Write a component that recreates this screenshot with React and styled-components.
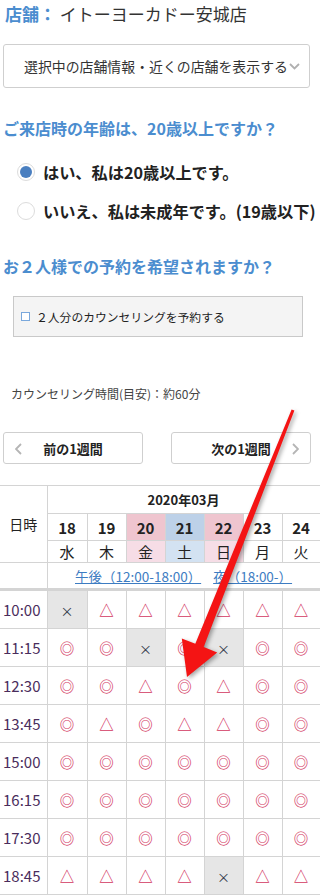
import React from "react";
import styled, { createGlobalStyle } from "styled-components";

const GlobalStyle = createGlobalStyle`
  html, body {
    margin: 0;
    padding: 0;
    background: #fff;
  }
  body {
    font-family: "Noto Sans CJK JP", "Noto Sans", sans-serif;
    color: #333;
  }
`;

const BLUE = "#4b8dcf";

const Page = styled.div`
  position: relative;
  width: 320px;
  height: 895px;
  overflow: hidden;
`;

const StoreLine = styled.div`
  padding: 4px 0 0 5px;
  font-size: 17px;
  line-height: 20px;
  color: #333;
  white-space: nowrap;
`;

const StoreLabel = styled.span`
  color: ${BLUE};
  font-weight: 700;
`;

const SelectBox = styled.div`
  margin: 20px 10px 0 3px;
  height: 44px;
  box-sizing: border-box;
  border: 1px solid #cfcfcf;
  border-radius: 3px;
  display: flex;
  align-items: center;
  gap: 1px;
  padding: 0 0 0 20px;
  font-size: 13.9px;
  color: #333;
  white-space: nowrap;
  overflow: hidden;

  svg {
    flex: none;
  }
`;

const Heading = styled.h2`
  margin: ${(p) => p.$top}px 0 0 3px;
  font-size: 16px;
  line-height: 22px;
  font-weight: 700;
  color: ${BLUE};
  white-space: nowrap;
`;

const RadioRow = styled.label`
  display: flex;
  align-items: center;
  gap: 8px;
  height: 30px;
  margin-top: ${(p) => p.$top}px;
  padding-left: 17px;
  font-size: 16.2px;
  font-weight: 700;
  color: #222;
  white-space: nowrap;
`;

const RadioDot = styled.span`
  position: relative;
  flex: none;
  width: 18px;
  height: 18px;
  box-sizing: border-box;
  border: 1px solid #dcdcdc;
  border-radius: 50%;
  background: #fff;

  &::after {
    content: "";
    position: absolute;
    left: 2px;
    top: 2px;
    width: 12px;
    height: 12px;
    border-radius: 50%;
    background: ${(p) => (p.$checked ? "#4a7fc0" : "transparent")};
  }
`;

const CheckPanel = styled.div`
  margin: 19px 0 0 13px;
  width: 290px;
  height: 41px;
  box-sizing: border-box;
  border: 1px solid #c9c9c9;
  background: #f4f4f4;
  display: flex;
  align-items: center;
  padding-left: 7px;
  gap: 6px;
  font-size: 11.8px;
  color: #222;
  white-space: nowrap;
`;

const CheckSquare = styled.span`
  flex: none;
  width: 9px;
  height: 9px;
  box-sizing: border-box;
  border: 1px solid #7aa8dc;
  background: #fff;
`;

const InfoText = styled.p`
  margin: 48px 0 0 11px;
  font-size: 12px;
  line-height: 18px;
  color: #444;
  white-space: nowrap;
`;

const WeekNav = styled.div`
  display: flex;
  gap: 28px;
  margin: 29px 0 0 3px;
`;

const WeekButton = styled.button`
  position: relative;
  width: 140px;
  height: 32px;
  box-sizing: border-box;
  border: 1px solid #cfcfcf;
  border-radius: 3px;
  background: #fff;
  font-family: inherit;
  font-size: 13px;
  font-weight: 700;
  color: #222;
  padding: 0;
  cursor: pointer;

  svg {
    position: absolute;
    top: 10px;
    ${(p) => (p.$side === "left" ? "left: 11px;" : "right: 11px;")}
  }
`;

const Table = styled.table`
  margin-top: 21px;
  width: 320px;
  border-collapse: collapse;
  table-layout: fixed;
`;

const Cell = styled.td`
  border: 1px solid #d4d4d4;
  padding: 0;
  text-align: center;
  vertical-align: middle;
  height: ${(p) => p.$h || 37}px;
  background: ${(p) => p.$bg || "#fff"};
  font-size: ${(p) => p.$fs || 15}px;
  font-weight: ${(p) => (p.$bold ? 700 : 400)};
  color: #222;
  white-space: nowrap;

  &:first-child {
    border-left: none;
  }
`;

const HeadRule = styled.tr`
  td {
    border-bottom: 3px solid #d4d4d4;
  }
`;

const TimeCell = styled(Cell)`
  text-align: left;
  padding-left: 3px;
  font-size: 15px;
  color: #4a2d5c;
`;

const Mark = styled.span`
  font-size: ${(p) => (p.$kind === "x" ? 13 : 14.5)}px;
  font-weight: ${(p) => (p.$kind === "x" ? 400 : 700)};
  color: ${(p) => (p.$kind === "x" ? "#2f3646" : "#d3375f")};
`;

const SlotLink = styled.a`
  color: #3d7cc2;
  text-decoration: underline;
  font-size: 13.5px;
  margin: 0 6px;
`;

const ArrowLayer = styled.svg`
  position: absolute;
  left: 0;
  top: 0;
  pointer-events: none;
  filter: drop-shadow(2px 2px 2px rgba(0, 0, 0, 0.35));
`;

const days = [
  { d: "18", w: "水" },
  { d: "19", w: "木" },
  { d: "20", w: "金", tone: "pink" },
  { d: "21", w: "土", tone: "blue" },
  { d: "22", w: "日", tone: "pink" },
  { d: "23", w: "月" },
  { d: "24", w: "火" },
];

const dayBg = { pink: "#efc5cf", blue: "#bdd1e8" };
const weekBg = { pink: "#f6dde6", blue: "#d3e2f2" };

const slots = [
  ["10:00", "x t t t t t t"],
  ["11:15", "o o x o x o o"],
  ["12:30", "o o t o t o o"],
  ["13:45", "o t o t t o o"],
  ["15:00", "o o o o o o o"],
  ["16:15", "o o o o o o o"],
  ["17:30", "o o o o o o o"],
  ["18:45", "t t t t x t t"],
];

const glyph = { o: "◎", t: "△", x: "×" };

const Chevron = ({ dir }) => (
  <svg width="7" height="12" viewBox="0 0 7 12">
    <polyline
      points={dir === "left" ? "6,1 1,6 6,11" : "1,1 6,6 1,11"}
      fill="none"
      stroke="#b5b5b5"
      strokeWidth="1.8"
    />
  </svg>
);

const Arrow = () => (
  <ArrowLayer width="320" height="895" viewBox="0 0 320 895">
    <polygon
      points="294.4,410.6 203.7,647.1 217.2,652.4 187,677 181.8,638.4 195.3,643.7 291.6,409.4"
      fill="#f41414"
    />
  </ArrowLayer>
);

export default function App() {
  return (
    <Page>
      <GlobalStyle />
      <StoreLine>
        <StoreLabel>店舗：</StoreLabel> イトーヨーカドー安城店
      </StoreLine>

      <SelectBox>
        <span>選択中の店舗情報・近くの店舗を表示する</span>
        <svg width="11" height="7" viewBox="0 0 11 7">
          <polyline points="1,1 5.5,5.5 10,1" fill="none" stroke="#b0b0b0" strokeWidth="1.8" />
        </svg>
      </SelectBox>

      <Heading $top={29}>ご来店時の年齢は、20歳以上ですか？</Heading>
      <RadioRow $top={18}>
        <RadioDot $checked />
        はい、私は20歳以上です。
      </RadioRow>
      <RadioRow $top={9}>
        <RadioDot />
        いいえ、私は未成年です。(19歳以下)
      </RadioRow>

      <Heading $top={29}>お２人様での予約を希望されますか？</Heading>
      <CheckPanel>
        <CheckSquare />
        ２人分のカウンセリングを予約する
      </CheckPanel>

      <InfoText>カウンセリング時間(目安)：約60分</InfoText>

      <WeekNav>
        <WeekButton $side="left">
          <Chevron dir="left" />
          前の1週間
        </WeekButton>
        <WeekButton $side="right">
          次の1週間
          <Chevron dir="right" />
        </WeekButton>
      </WeekNav>

      <Table>
        <colgroup>
          <col style={{ width: 47 }} />
          <col style={{ width: 40 }} />
          <col style={{ width: 39 }} />
          <col style={{ width: 39 }} />
          <col style={{ width: 39 }} />
          <col style={{ width: 39 }} />
          <col style={{ width: 39 }} />
          <col style={{ width: 38 }} />
        </colgroup>
        <thead>
          <tr>
            <Cell as="th" rowSpan={3} $fs={14}>
              日時
            </Cell>
            <Cell as="th" colSpan={7} $h={27} $fs={13} $bold>
              2020年03月
            </Cell>
          </tr>
          <tr>
            {days.map((x) => (
              <Cell key={x.d} $h={26} $bold $bg={dayBg[x.tone]}>
                {x.d}
              </Cell>
            ))}
          </tr>
          <tr>
            {days.map((x) => (
              <Cell key={x.d} $h={19} $bg={weekBg[x.tone]}>
                {x.w}
              </Cell>
            ))}
          </tr>
          <HeadRule>
            <Cell $h={25} />
            <Cell colSpan={7} $h={25}>
              <SlotLink href="#pm">午後（12:00-18:00）</SlotLink>
              <SlotLink href="#night">夜（18:00-）</SlotLink>
            </Cell>
          </HeadRule>
        </thead>
        <tbody>
          {slots.map(([time, marks]) => (
            <tr key={time}>
              <TimeCell>{time}</TimeCell>
              {marks.split(" ").map((m, i) => (
                <Cell key={i} $bg={m === "x" ? "#e6e6e6" : "#fff"}>
                  <Mark $kind={m}>{glyph[m]}</Mark>
                </Cell>
              ))}
            </tr>
          ))}
        </tbody>
      </Table>

      <Arrow />
    </Page>
  );
}
